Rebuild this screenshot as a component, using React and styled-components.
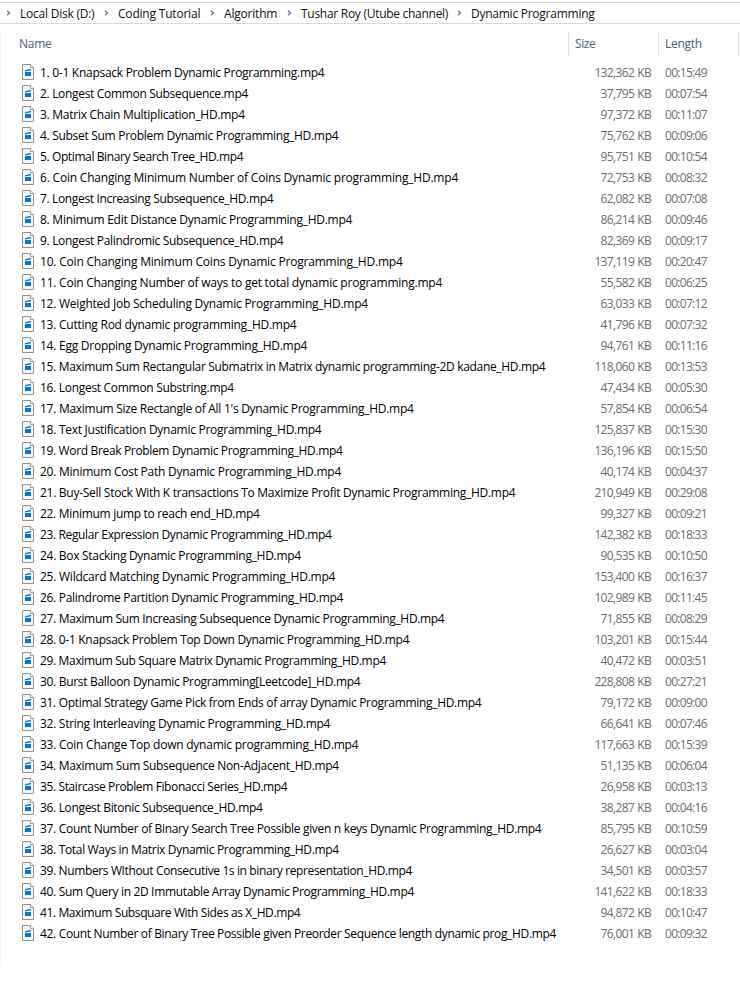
import React from "react";
import styled, { createGlobalStyle } from "styled-components";

const GlobalStyle = createGlobalStyle`
  * { box-sizing: border-box; }
  html, body { margin: 0; background: #fff; overflow: hidden; }
`;

const Window = styled.div`
  width: 740px;
  height: 981px;
  background: #fff;
  color: #000;
  font-family: "Open Sans", "Noto Sans", sans-serif;
  font-size: 12px;
  white-space: nowrap;
  padding-top: 2px;
`;

const AddressBar = styled.nav`
  display: flex;
  align-items: center;
  height: 22px;
  border-top: 1px solid #d9d9d9;
  border-bottom: 1px solid #d9d9d9;
  color: #111;
`;

const Crumb = styled.div`
  display: flex;
  align-items: center;
  width: ${(p) => p.$width}px;
`;

const CrumbLabel = styled.span`
  letter-spacing: ${(p) => p.$tracking}px;
`;

const ChevronIcon = styled.svg`
  flex: none;
  width: 5px;
  height: 6px;
  margin: 0 9px 0 6px;
`;

const Panel = styled.main`
  margin-top: 7px;
  height: 935px;
  border-left: 1px solid #f4f4f4;
`;

const HeaderRow = styled.div`
  display: flex;
  height: 25px;
  color: #4c607a;
`;

const HeaderCell = styled.div`
  width: ${(p) => p.$width}px;
  padding-left: ${(p) => p.$pad}px;
  border-right: 1px solid #e2e2e2;
  line-height: 25px;
  letter-spacing: ${(p) => p.$tracking}px;
`;

const FileList = styled.div`
  padding-top: 6px;
`;

const FileRow = styled.div`
  display: flex;
  align-items: center;
  height: 21px;
  line-height: 21px;
  padding-left: 21px;
`;

const FileIcon = styled.svg`
  flex: none;
  width: 12px;
  height: 16px;
  margin: 0 6px 1px 0;
`;

const FileName = styled.div`
  width: 540px;
  letter-spacing: ${(p) => p.$tracking}px;
`;

const FileSize = styled.div`
  width: 71px;
  text-align: right;
  color: #6d6d6d;
  letter-spacing: -0.65px;
  word-spacing: 0.6px;
`;

const FileLength = styled.div`
  margin-left: 14px;
  color: #6d6d6d;
  letter-spacing: -0.7px;
`;

const crumbs = [
  ["Local Disk (D:)", 98, -0.23],
  ["Coding Tutorial", 106, -0.2],
  ["Algorithm", 77, -0.2],
  ["Tushar Roy (Utube channel)", 170, -0.28],
  ["Dynamic Programming", 150, -0.25],
];

// name, size in KB, mm:ss length, letter spacing of the name
const files = [
  ["1. 0-1 Knapsack Problem Dynamic Programming.mp4", "132,362", "15:49", -0.28],
  ["2. Longest Common Subsequence.mp4", "37,795", "07:54", -0.32],
  ["3. Matrix Chain Multiplication_HD.mp4", "97,372", "11:07", -0.27],
  ["4. Subset Sum Problem Dynamic Programming_HD.mp4", "75,762", "09:06", -0.3],
  ["5. Optimal Binary Search Tree_HD.mp4", "95,751", "10:54", -0.39],
  ["6. Coin Changing Minimum Number of Coins Dynamic programming_HD.mp4", "72,753", "08:32", -0.2],
  ["7. Longest Increasing Subsequence_HD.mp4", "62,082", "07:08", -0.35],
  ["8. Minimum Edit Distance Dynamic Programming_HD.mp4", "86,214", "09:46", -0.26],
  ["9. Longest Palindromic Subsequence_HD.mp4", "82,369", "09:17", -0.32],
  ["10. Coin Changing Minimum Coins Dynamic Programming_HD.mp4", "137,119", "20:47", -0.2],
  ["11. Coin Changing Number of ways to get total dynamic programming.mp4", "55,582", "06:25", -0.23],
  ["12. Weighted Job Scheduling Dynamic Programming_HD.mp4", "63,033", "07:12", -0.24],
  ["13. Cutting Rod dynamic programming_HD.mp4", "41,796", "07:32", -0.25],
  ["14. Egg Dropping Dynamic Programming_HD.mp4", "94,761", "11:16", -0.25],
  ["15. Maximum Sum Rectangular Submatrix in Matrix dynamic programming-2D kadane_HD.mp4", "118,060", "13:53", -0.325],
  ["16. Longest Common Substring.mp4", "47,434", "05:30", -0.3],
  ["17. Maximum Size Rectangle of All 1's Dynamic Programming_HD.mp4", "57,854", "06:54", -0.275],
  ["18. Text Justification Dynamic Programming_HD.mp4", "125,837", "15:30", -0.27],
  ["19. Word Break Problem Dynamic Programming_HD.mp4", "136,196", "15:50", -0.345],
  ["20. Minimum Cost Path Dynamic Programming_HD.mp4", "40,174", "04:37", -0.25],
  ["21. Buy-Sell Stock With K transactions To Maximize Profit Dynamic Programming_HD.mp4", "210,949", "29:08", -0.28],
  ["22. Minimum jump to reach end_HD.mp4", "99,327", "09:21", -0.31],
  ["23. Regular Expression Dynamic Programming_HD.mp4", "142,382", "18:33", -0.365],
  ["24. Box Stacking Dynamic Programming_HD.mp4", "90,535", "10:50", -0.295],
  ["25. Wildcard Matching Dynamic Programming_HD.mp4", "153,400", "16:37", -0.24],
  ["26. Palindrome Partition Dynamic Programming_HD.mp4", "102,989", "11:45", -0.3],
  ["27. Maximum Sum Increasing Subsequence Dynamic Programming_HD.mp4", "71,855", "08:29", -0.33],
  ["28. 0-1 Knapsack Problem Top Down Dynamic Programming_HD.mp4", "103,201", "15:44", -0.3],
  ["29. Maximum Sub Square Matrix Dynamic Programming_HD.mp4", "40,472", "03:51", -0.345],
  ["30. Burst Balloon Dynamic Programming[Leetcode]_HD.mp4", "228,808", "27:21", -0.31],
  ["31. Optimal Strategy Game Pick from Ends of array Dynamic Programming_HD.mp4", "79,172", "09:00", -0.32],
  ["32. String Interleaving Dynamic Programming_HD.mp4", "66,641", "07:46", -0.285],
  ["33. Coin Change Top down dynamic programming_HD.mp4", "117,663", "15:39", -0.24],
  ["34. Maximum Sum Subsequence Non-Adjacent_HD.mp4", "51,135", "06:04", -0.305],
  ["35. Staircase Problem Fibonacci Series_HD.mp4", "26,958", "03:13", -0.385],
  ["36. Longest Bitonic Subsequence_HD.mp4", "38,287", "04:16", -0.33],
  ["37. Count Number of Binary Search Tree Possible given n keys Dynamic Programming_HD.mp4", "85,795", "10:59", -0.315],
  ["38. Total Ways in Matrix Dynamic Programming_HD.mp4", "26,627", "03:04", -0.33],
  ["39. Numbers WIthout Consecutive 1s in binary representation_HD.mp4", "34,501", "03:57", -0.37],
  ["40. Sum Query in 2D Immutable Array Dynamic Programming_HD.mp4", "141,622", "18:33", -0.335],
  ["41. Maximum Subsquare With Sides as X_HD.mp4", "94,872", "10:47", -0.395],
  ["42. Count Number of Binary Tree Possible given Preorder Sequence length dynamic prog_HD.mp4", "76,001", "09:32", -0.335],
];

function Chevron() {
  return (
    <ChevronIcon viewBox="0 0 5 6" fill="none" stroke="#7a7a7a" strokeWidth="1.5">
      <path d="M1 .7 3.4 3 1 5.3" />
    </ChevronIcon>
  );
}

function VideoIcon() {
  return (
    <FileIcon viewBox="0 0 12 16">
      <path d="M.5.5H8.5L11.5 3.5V15.5H.5Z" fill="#f9f9f9" stroke="#929292" />
      <path d="M8.5.5V3.5H11.5" fill="#fff" stroke="#a0a0a0" />
      <path d="M3 8H9V12H3Z" fill="#0078d7" />
      <path d="M3 6.9 9 5.5" stroke="#0078d7" strokeWidth="1.3" />
    </FileIcon>
  );
}

export default function App() {
  return (
    <>
      <GlobalStyle />
      <Window>
        <AddressBar>
          {crumbs.map(([label, width, tracking]) => (
            <Crumb key={label} $width={width}>
              <Chevron />
              <CrumbLabel $tracking={tracking}>{label}</CrumbLabel>
            </Crumb>
          ))}
        </AddressBar>
        <Panel>
          <HeaderRow>
            <HeaderCell $width={568} $pad={18} $tracking={-0.25}>Name</HeaderCell>
            <HeaderCell $width={90} $pad={6} $tracking={-0.4}>Size</HeaderCell>
            <HeaderCell $width={80} $pad={6} $tracking={-0.3}>Length</HeaderCell>
          </HeaderRow>
          <FileList>
            {files.map(([name, size, length, tracking]) => (
              <FileRow key={name}>
                <VideoIcon />
                <FileName $tracking={tracking}>{name}</FileName>
                <FileSize>{size} KB</FileSize>
                <FileLength>00:{length}</FileLength>
              </FileRow>
            ))}
          </FileList>
        </Panel>
      </Window>
    </>
  );
}
